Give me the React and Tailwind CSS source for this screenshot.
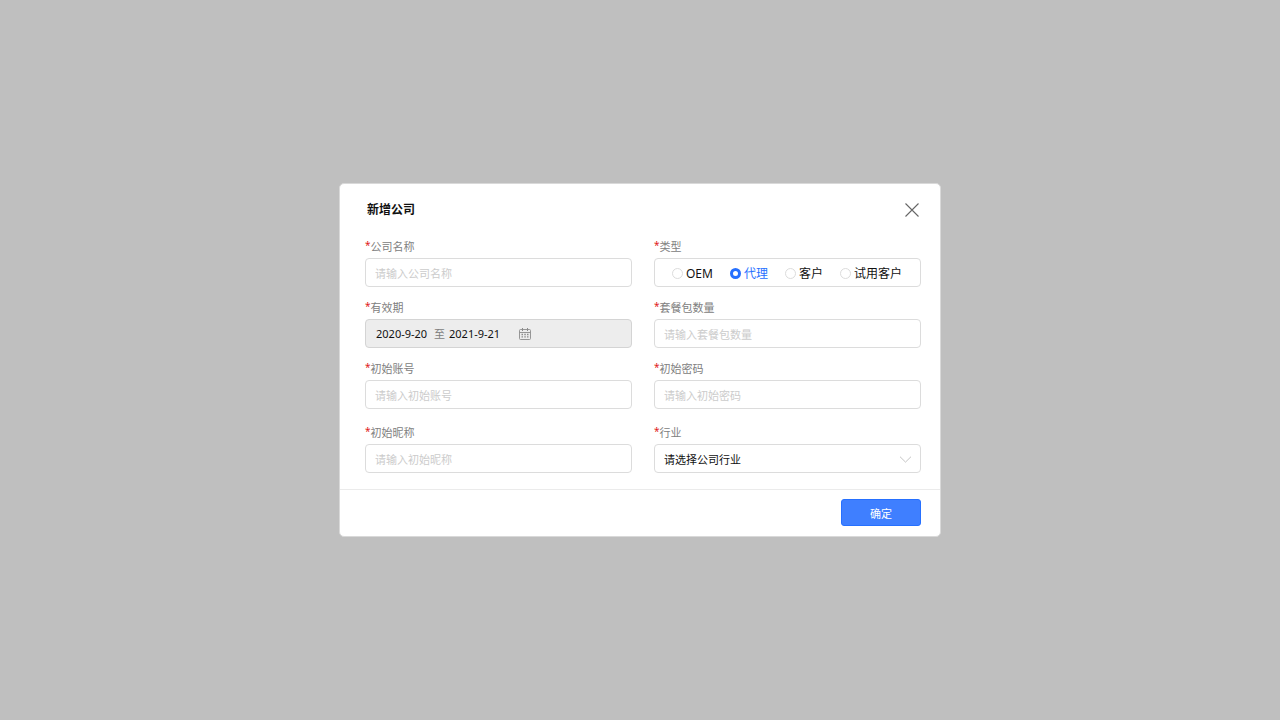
import React, { useState } from "react";

const controlBox =
  "h-[29px] w-full rounded-[4px] border border-[#dcdcdc] bg-white pt-0.5 text-[11px] leading-4";

function Label({ htmlFor, id, children }) {
  const Tag = htmlFor ? "label" : "span";
  return (
    <Tag id={id} htmlFor={htmlFor} className="block text-[11px] leading-4 text-[#808080]">
      <span className="align-top text-[10px] leading-3 text-[#e02020]">*</span>
      {children}
    </Tag>
  );
}

function TextField({ id, label, placeholder, type = "text" }) {
  return (
    <div className="flex flex-col gap-[3px]">
      <Label htmlFor={id}>{label}</Label>
      <input
        id={id}
        type={type}
        placeholder={placeholder}
        className={`${controlBox} px-[9px] text-[#111] outline-none placeholder:text-[#cccccc] focus:border-[#3f7fff]`}
      />
    </div>
  );
}

function TypeField() {
  const [value, setValue] = useState("代理");
  return (
    <div className="flex flex-col gap-[3px]">
      <Label id="type-label">类型</Label>
      <div
        role="radiogroup"
        aria-labelledby="type-label"
        className={`${controlBox} flex items-center gap-[17px] pl-[17px]`}
      >
        {["OEM", "代理", "客户", "试用客户"].map((option) => (
          <label
            key={option}
            className="flex items-center gap-[3px] text-[12px] leading-4 whitespace-nowrap text-[#111] has-[:checked]:text-[#2670ff]"
          >
            <input
              type="radio"
              name="company-type"
              value={option}
              checked={value === option}
              onChange={() => setValue(option)}
              className="size-[11px] appearance-none rounded-full border border-[#dcdcdc] bg-white checked:border-[3px] checked:border-[#2670ff]"
            />
            {option}
          </label>
        ))}
      </div>
    </div>
  );
}

function CalendarIcon() {
  return (
    <svg width="12" height="12" viewBox="0 0 12 12" fill="none" stroke="#8c8c8c" aria-hidden="true">
      <rect x="0.5" y="1.5" width="11" height="10" rx="1" strokeWidth="0.9" />
      <path d="M0.5 4.5H11.5" strokeWidth="0.9" />
      <path d="M3.5 0V3M8.5 0V3" strokeWidth="1" />
      <path d="M2.5 6.5H4M5.3 6.5H6.8M8 6.5H9.5M2.5 8.8H4M5.3 8.8H6.8M8 8.8H9.5" strokeWidth="1.3" />
    </svg>
  );
}

function DateField() {
  return (
    <div className="flex flex-col gap-[3px]">
      <Label htmlFor="date-start">有效期</Label>
      <div className="flex h-[29px] items-center rounded-[4px] border border-[#d4d4d4] bg-[#ededed] px-[10px] text-[11px] leading-4">
        <input
          id="date-start"
          type="text"
          defaultValue="2020-9-20"
          className="w-[58px] bg-transparent text-[#111] outline-none"
        />
        <span className="text-[#808080]">至</span>
        <input
          aria-label="结束日期"
          type="text"
          defaultValue="2021-9-21"
          className="ml-1 w-[58px] bg-transparent text-[#111] outline-none"
        />
        <button type="button" aria-label="选择日期" className="ml-3">
          <CalendarIcon />
        </button>
      </div>
    </div>
  );
}

function IndustryField() {
  return (
    <div className="flex flex-col gap-[3px]">
      <Label htmlFor="industry">行业</Label>
      <div className="relative">
        <select
          id="industry"
          className={`${controlBox} block appearance-none px-[9px] text-[#111] outline-none`}
        >
          <option>请选择公司行业</option>
        </select>
        <div className="pointer-events-none absolute inset-y-0 right-[9px] flex items-center pt-0.5">
          <svg width="13" height="7" viewBox="0 0 13 7" fill="none" stroke="#c4c4c4" aria-hidden="true">
            <path d="M1 0.7L6.5 6.1L12 0.7" />
          </svg>
        </div>
      </div>
    </div>
  );
}

export default function App() {
  return (
    <main className="flex min-h-screen items-center justify-center bg-[#bfbfbf] font-['Noto_Sans','Noto_Sans_CJK_SC',sans-serif]">
      <form
        role="dialog"
        aria-labelledby="dialog-title"
        onSubmit={(event) => event.preventDefault()}
        className="w-full max-w-[602px] rounded-[5px] border border-[#d9d9d9] bg-white"
      >
        <header className="flex items-center justify-between pt-4 pr-[21px] pl-[27px]">
          <h1 id="dialog-title" className="text-[12px] leading-5 font-bold text-[#111]">
            新增公司
          </h1>
          <button type="button" aria-label="关闭">
            <svg width="14" height="14" viewBox="0 0 14 14" fill="none" stroke="#666" aria-hidden="true">
              <path d="M0.5 0.5L13.5 13.5M13.5 0.5L0.5 13.5" strokeWidth="1.1" />
            </svg>
          </button>
        </header>
        <div className="flex flex-col gap-4 pt-[19px] pr-[19px] pb-4 pl-[25px]">
          <div className="grid grid-cols-2 gap-x-[22px] gap-y-[13px]">
            <TextField id="company" label="公司名称" placeholder="请输入公司名称" />
            <TypeField />
            <DateField />
            <TextField id="packages" label="套餐包数量" placeholder="请输入套餐包数量" />
            <TextField id="account" label="初始账号" placeholder="请输入初始账号" />
            <TextField id="password" type="password" label="初始密码" placeholder="请输入初始密码" />
          </div>
          <div className="grid grid-cols-2 gap-x-[22px]">
            <TextField id="nickname" label="初始昵称" placeholder="请输入初始昵称" />
            <IndustryField />
          </div>
        </div>
        <footer className="flex justify-end border-t border-[#ebebeb] pt-[9px] pr-[19px] pb-[10px]">
          <button
            type="submit"
            className="h-[27px] w-20 rounded-[3px] border border-[#2670ff] bg-[#3f7fff] pt-0.5 text-[11px] leading-4 text-white"
          >
            确定
          </button>
        </footer>
      </form>
    </main>
  );
}
